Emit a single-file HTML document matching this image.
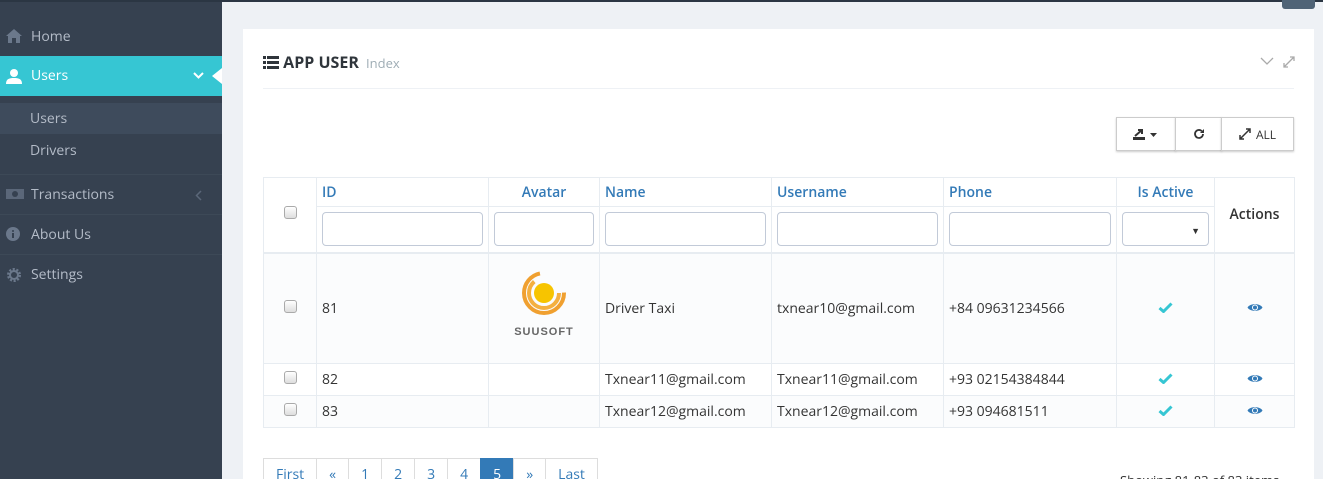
<!DOCTYPE html>
<html><head><meta charset="utf-8"><style>
*{box-sizing:border-box;margin:0;padding:0}
html,body{width:1323px;height:479px;overflow:hidden}
body{background:#eef1f5;font-family:"Open Sans","Liberation Sans",sans-serif;font-size:14px;color:#333;position:relative}
.top{position:absolute;left:0;top:0;width:1323px;height:2px;background:#2b3643}
.side{position:absolute;left:0;top:2px;width:222px;height:477px;background:#364150}
.mi{position:absolute;left:0;width:222px;height:40px;color:#b4bcc8;font-size:14px;line-height:40px;padding-left:31px;border-top:1px solid #3d4957}
.mi svg{position:absolute;left:6px;top:12px}
.act{background:#36c6d3;color:#fff;border:none}
.sub{position:absolute;left:0;width:222px;height:31px;line-height:31px;padding-left:30px;color:#b4bcc8;font-size:14px}
.card{position:absolute;left:243px;top:29px;width:1071px;height:450px;background:#fff}
.ttl{position:absolute;left:20px;top:22px;font-size:16px;font-weight:bold;color:#2f353b}
.ttl small{font-size:13px;font-weight:normal;color:#9eacb4;margin-left:3px}
.hr{position:absolute;left:20px;top:59px;width:1031px;height:1px;background:#eef1f5}
.btns{position:absolute;left:873px;top:88px;height:34px;display:flex}
.btns div{border:1px solid #ccc;height:34px;background:#fff;box-shadow:0 1px 2px rgba(0,0,0,.2);font-size:12px;display:flex;align-items:center;justify-content:center;color:#333}
table{position:absolute;left:20px;top:148px;border-collapse:collapse;width:1032px;table-layout:fixed}
td,th{border:1px solid #e7ecf1;font-size:14px;vertical-align:middle}
th{color:#337ab7;font-weight:600;text-align:left;padding-left:5px;height:29px}
.f td{height:46px;padding:0 5px}
.f input{width:100%;height:34px;border:1px solid #c2cad8;border-radius:4px}
.cb{display:inline-block;width:13px;height:13px;border:1px solid #aaa;border-radius:3px;background:linear-gradient(#fff,#ddd)}
tbody td{padding-left:5px}
.r1 td{background:#fbfcfd;height:111px}
.r2 td{height:32px}
.r3 td{background:#fbfcfd;height:32px}
.c{text-align:center;padding-left:0!important}
.pg{position:absolute;left:20px;top:429px;display:flex;height:34px}
.pg div{border:1px solid #ddd;margin-left:-1px;padding:0 12px;line-height:32px;color:#337ab7;font-size:14px}
.pg .on{background:#337ab7;color:#fff;border-color:#337ab7}
</style></head><body>
<div class="top"></div>
<div class="side">
 <div class="mi" style="top:15px;border:none"><svg width="16" height="14" viewBox="0 0 16 14"><path d="M8 0L0 7h2v7h4V9h4v5h4V7h2z" fill="#6b788b"/></svg>Home</div>
 <div class="mi act" style="top:54px"><svg width="16" height="16" viewBox="0 0 16 16"><circle cx="8" cy="5" r="4" fill="#fff"/><path d="M0 16c0-5 3-6 8-6s8 1 8 6z" fill="#fff"/></svg>Users<svg style="left:193px;top:16px" width="11" height="8" viewBox="0 0 11 8"><path d="M1 1l4.5 4.5L10 1" stroke="#fff" stroke-width="2" fill="none"/></svg><span style="position:absolute;right:0;top:12px;width:0;height:0;border-top:8px solid transparent;border-bottom:8px solid transparent;border-right:10px solid #fff"></span></div>
 <div class="sub" style="top:101px;background:#3e4b5c">Users</div>
 <div class="sub" style="top:133px">Drivers</div>
 <div class="mi" style="top:172px"><svg width="18" height="14" viewBox="0 0 18 14"><rect x="0" y="2" width="18" height="10" fill="#5b6779"/><circle cx="9" cy="7" r="3" fill="#364150"/></svg>Transactions<svg style="left:195px;top:15px" width="7" height="11" viewBox="0 0 7 11"><path d="M6 1L1.5 5.5 6 10" stroke="#5b6779" stroke-width="1.5" fill="none"/></svg></div>
 <div class="mi" style="top:212px"><svg width="14" height="14" viewBox="0 0 14 14"><circle cx="7" cy="7" r="7" fill="#6b788b"/><rect x="6" y="6" width="2" height="5" fill="#364150"/><circle cx="7" cy="4" r="1" fill="#364150"/></svg>About Us</div>
 <div class="mi" style="top:252px"><svg width="16" height="16" viewBox="0 0 16 16"><circle cx="8" cy="8" r="5.5" fill="none" stroke="#6b788b" stroke-width="3" stroke-dasharray="2 1.5"/><circle cx="8" cy="8" r="4" fill="none" stroke="#6b788b" stroke-width="2"/></svg>Settings</div>
</div>
<div style="position:absolute;left:1282px;top:0;width:33px;height:9px;background:#4f6376;border-radius:0 0 3px 3px"></div>
<div class="card">
 <div class="ttl"><svg width="16" height="13" viewBox="0 0 16 13" style="vertical-align:-1px"><g fill="#2f353b"><rect x="0" y="0" width="3" height="3"/><rect x="4" y="0" width="12" height="3"/><rect x="0" y="5" width="3" height="3"/><rect x="4" y="5" width="12" height="3"/><rect x="0" y="10" width="3" height="3"/><rect x="4" y="10" width="12" height="3"/></g></svg> APP USER <small>Index</small></div>
 <svg style="position:absolute;left:1017px;top:27px" width="40" height="12" viewBox="0 0 40 12"><path d="M1 2l6 6 6-6" stroke="#aaa" stroke-width="1.3" fill="none"/><path d="M24 11l10-10M30 1h4v4M24 7v4h4" stroke="#aaa" stroke-width="1.3" fill="none"/></svg>
 <div class="hr"></div>
 <div class="btns"><div style="width:60px"><svg width="26" height="12" viewBox="0 0 26 12"><rect x="0" y="9" width="12" height="3" fill="#333"/><path d="M2 8l7-6M5 2h4v4" stroke="#333" stroke-width="2" fill="none"/><path d="M17 5h7l-3.5 4z" fill="#333"/></svg></div><div style="width:47px;margin-left:-1px"><svg width="12" height="12" viewBox="0 0 12 12"><path d="M10 6a4 4 0 1 1-1.2-2.9" stroke="#333" stroke-width="1.8" fill="none"/><path d="M11 1v4H7z" fill="#333"/></svg></div><div style="width:73px;margin-left:-1px"><svg width="12" height="12" viewBox="0 0 12 12" style="margin-right:5px"><path d="M1 11l10-10M7 1h4v4M1 7v4h4" stroke="#333" stroke-width="1.5" fill="none"/></svg>ALL</div></div>
 <table>
  <colgroup><col style="width:53px"><col style="width:172px"><col style="width:111px"><col style="width:172px"><col style="width:172px"><col style="width:173px"><col style="width:98px"><col style="width:80px"></colgroup>
  <thead>
  <tr><th rowspan="2" class="c" style="border-bottom:2px solid #e7ecf1"><span class="cb"></span></th><th>ID</th><th class="c" style="text-align:center">Avatar</th><th>Name</th><th>Username</th><th>Phone</th><th style="text-align:center;padding:0">Is Active</th><th rowspan="2" style="color:#333;text-align:center;padding:0;border-bottom:2px solid #e7ecf1">Actions</th></tr>
  <tr class="f"><td style="border-bottom:2px solid #e7ecf1"><input></td><td style="border-bottom:2px solid #e7ecf1"><input></td><td style="border-bottom:2px solid #e7ecf1"><input></td><td style="border-bottom:2px solid #e7ecf1"><input></td><td style="border-bottom:2px solid #e7ecf1"><input></td><td style="border-bottom:2px solid #e7ecf1;position:relative"><input><span style="position:absolute;right:14px;top:17px;font-size:9px">&#9660;</span></td></tr>
  </thead>
  <tbody>
  <tr class="r1"><td class="c"><span class="cb"></span></td><td>81</td><td class="c"><svg width="70" height="70" viewBox="0 0 70 70"><circle cx="35" cy="22" r="20" fill="none" stroke="#f0a030" stroke-width="4" stroke-dasharray="90 35"/><circle cx="35" cy="22" r="15" fill="none" stroke="#f4b040" stroke-width="4" stroke-dasharray="60 35"/><circle cx="35" cy="22" r="10" fill="#f7c400"/><text x="35" y="64" text-anchor="middle" font-size="11" font-weight="bold" font-family="Liberation Sans" fill="#666" letter-spacing="1">SUUSOFT</text></svg></td><td>Driver Taxi</td><td>txnear10@gmail.com</td><td>+84 09631234566</td><td class="c"><svg width="15" height="11" viewBox="0 0 15 11"><path d="M1.5 6l4 3.5L13.5 1.5" stroke="#36c6d3" stroke-width="3" fill="none"/></svg></td><td class="c"><svg width="16" height="11" viewBox="0 0 16 11"><path d="M0.5 5.5C3 1 13 1 15.5 5.5 13 10 3 10 0.5 5.5z" fill="#337ab7"/><circle cx="8" cy="5.5" r="3" fill="#fff"/><circle cx="8" cy="5.5" r="2" fill="#337ab7"/></svg></td></tr>
  <tr class="r2"><td class="c"><span class="cb"></span></td><td>82</td><td></td><td>Txnear11@gmail.com</td><td>Txnear11@gmail.com</td><td>+93 02154384844</td><td class="c"><svg width="15" height="11" viewBox="0 0 15 11"><path d="M1.5 6l4 3.5L13.5 1.5" stroke="#36c6d3" stroke-width="3" fill="none"/></svg></td><td class="c"><svg width="16" height="11" viewBox="0 0 16 11"><path d="M0.5 5.5C3 1 13 1 15.5 5.5 13 10 3 10 0.5 5.5z" fill="#337ab7"/><circle cx="8" cy="5.5" r="3" fill="#fff"/><circle cx="8" cy="5.5" r="2" fill="#337ab7"/></svg></td></tr>
  <tr class="r3"><td class="c"><span class="cb"></span></td><td>83</td><td></td><td>Txnear12@gmail.com</td><td>Txnear12@gmail.com</td><td>+93 094681511</td><td class="c"><svg width="15" height="11" viewBox="0 0 15 11"><path d="M1.5 6l4 3.5L13.5 1.5" stroke="#36c6d3" stroke-width="3" fill="none"/></svg></td><td class="c"><svg width="16" height="11" viewBox="0 0 16 11"><path d="M0.5 5.5C3 1 13 1 15.5 5.5 13 10 3 10 0.5 5.5z" fill="#337ab7"/><circle cx="8" cy="5.5" r="3" fill="#fff"/><circle cx="8" cy="5.5" r="2" fill="#337ab7"/></svg></td></tr>
  </tbody>
 </table>
 <div class="pg"><div style="margin-left:0">First</div><div>&laquo;</div><div>1</div><div>2</div><div>3</div><div>4</div><div class="on">5</div><div>&raquo;</div><div>Last</div></div>
 <div style="position:absolute;left:877px;top:442px;font-size:13px;color:#333">Showing 81-83 of 83 items</div>
</div>
</body></html>
